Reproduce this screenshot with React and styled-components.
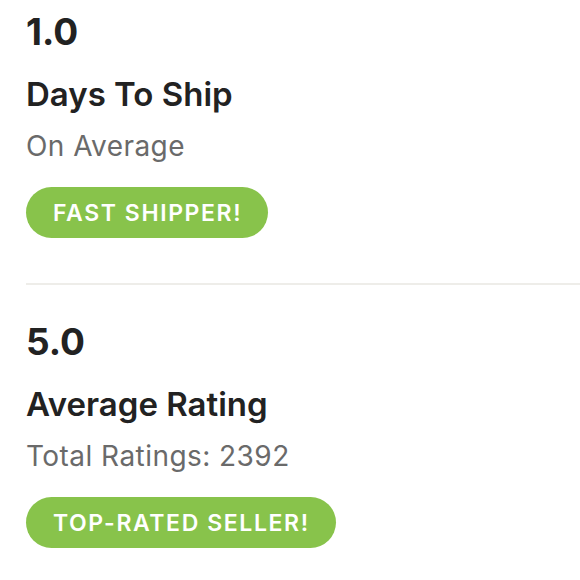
import React from "react";
import styled, { createGlobalStyle } from "styled-components";

const Global = createGlobalStyle`
  html, body { margin: 0; padding: 0; background: #ffffff; }
  body { font-family: "Inter", "Lato", sans-serif; }
`;

const Page = styled.div`
  display: flex;
  flex-direction: column;
  width: 580px;
  padding-top: 8px;
`;

const Section = styled.section`
  display: flex;
  flex-direction: column;
  align-items: flex-start;
  padding-left: 26px;
`;

const Value = styled.div`
  font-size: 37px;
  line-height: 48px;
  font-weight: 700;
  color: #222222;
`;

const Title = styled.div`
  margin-top: 18px;
  font-size: 33px;
  line-height: 40px;
  font-weight: 600;
  color: #222222;
`;

const Sub = styled.div`
  margin-top: 15px;
  font-size: 28px;
  line-height: 34px;
  font-weight: 400;
  letter-spacing: 0.45px;
  color: #6a6a6a;
`;

const Badge = styled.div`
  margin-top: 24px;
  height: 51px;
  display: flex;
  align-items: center;
  padding: 0 26px 0 27px;
  border-radius: 26px;
  background: #88c34b;
  color: #ffffff;
  font-size: 23px;
  font-weight: 600;
  letter-spacing: 1.6px;
`;

const Divider = styled.hr`
  margin: 45px 0 33px 26px;
  border: none;
  height: 2px;
  background: #eeede9;
`;

const stats = [
  { value: "1.0", title: "Days To Ship", sub: "On Average", badge: "FAST SHIPPER!" },
  { value: "5.0", title: "Average Rating", sub: "Total Ratings: 2392", badge: "TOP-RATED SELLER!" },
];

export default function App() {
  return (
    <>
      <Global />
      <Page>
        {stats.map((s, i) => (
          <React.Fragment key={s.value}>
            {i > 0 && <Divider />}
            <Section>
              <Value>{s.value}</Value>
              <Title>{s.title}</Title>
              <Sub>{s.sub}</Sub>
              <Badge>{s.badge}</Badge>
            </Section>
          </React.Fragment>
        ))}
      </Page>
    </>
  );
}
